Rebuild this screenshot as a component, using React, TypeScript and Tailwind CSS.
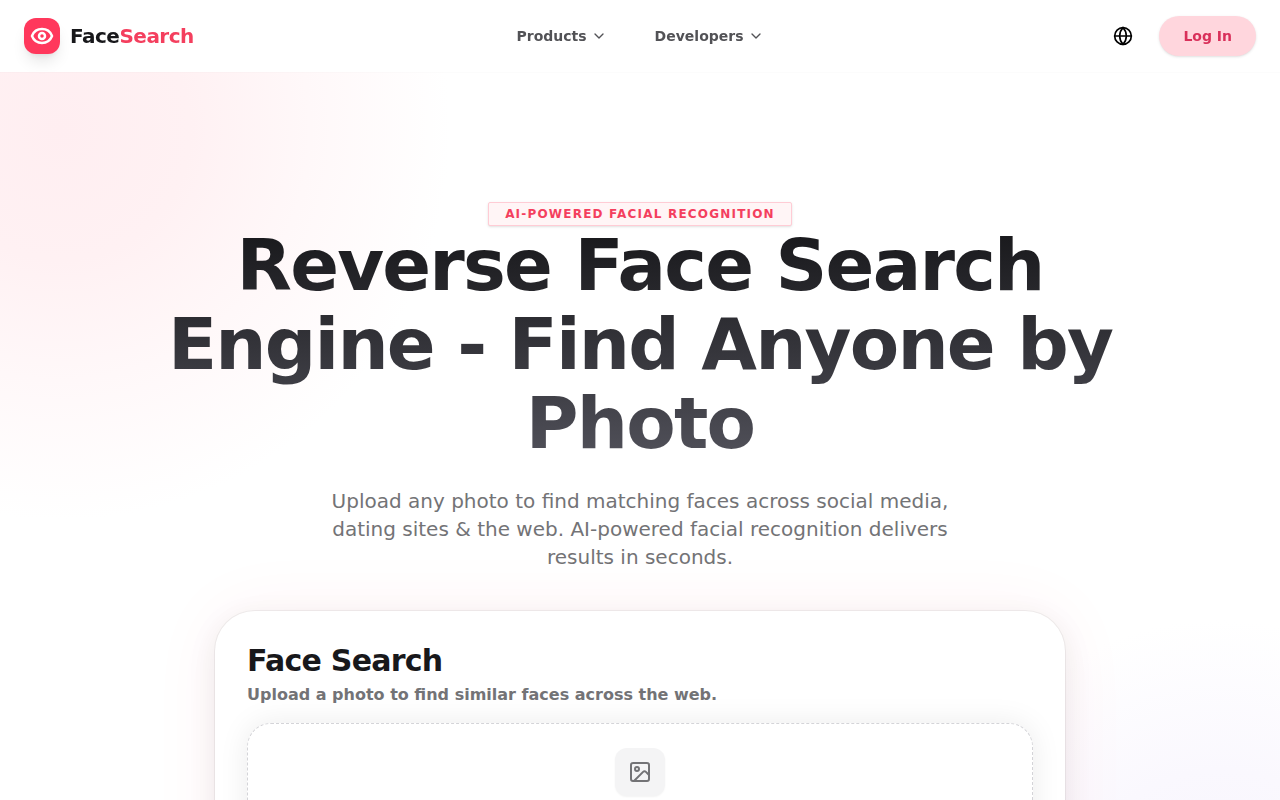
import React, { useState } from "react";
import { ChevronDown, Eye, Globe, Image } from "lucide-react";

const menus = ["Products", "Developers"];

const Logo = () => (
  <a href="#" className="flex items-center gap-2.5">
    <span className="flex size-9 items-center justify-center rounded-xl bg-[#ff385c] text-white shadow-lg shadow-black/10">
      <Eye size={24} strokeWidth={2.5} />
    </span>
    <span className="text-xl font-bold tracking-tight text-[#18181b]">
      Face<span className="text-[#f43f5e]">Search</span>
    </span>
  </a>
);

const Header = () => (
  <header className="fixed inset-x-0 top-0 z-20 grid h-[72px] grid-cols-[1fr_auto_1fr] items-center bg-white px-6 shadow-[0_1px_1px_rgba(0,0,0,0.01)]">
    <Logo />
    <nav className="flex items-center gap-12">
      {menus.map((m) => (
        <button
          key={m}
          type="button"
          className="flex cursor-pointer items-center gap-1 text-sm font-semibold text-[#525256]"
        >
          {m}
          <ChevronDown size={16} />
        </button>
      ))}
    </nav>
    <div className="flex items-center justify-end gap-4">
      <button
        type="button"
        aria-label="Language"
        className="flex size-10 cursor-pointer items-center justify-center text-black"
      >
        <Globe size={20} />
      </button>
      <button
        type="button"
        className="h-10 cursor-pointer rounded-full bg-[#ffd6dd] px-6 text-sm font-semibold text-[#d9305a] shadow-sm"
      >
        Log In
      </button>
    </div>
  </header>
);

const UploadCard = () => {
  const [fileName, setFileName] = useState("");

  return (
    <div className="w-full max-w-[850px] rounded-[40px] bg-white p-8 text-left shadow-[0_0_0_1px_rgba(0,0,0,0.05),0_8px_30px_rgba(0,0,0,0.08),0_0_70px_rgba(255,56,92,0.06)]">
      <h2 className="text-3xl font-bold tracking-tight text-[#18181b]">Face Search</h2>
      <p className="mt-1 font-semibold text-[#737376]">
        Upload a photo to find similar faces across the web.
      </p>
      <label className="mt-4 flex min-h-64 cursor-pointer flex-col items-center rounded-3xl border border-dashed border-[#d4d4d8] bg-white p-6 shadow-[0_0_30px_rgba(0,0,0,0.08)]">
        <input
          type="file"
          accept="image/*"
          aria-label="Upload a photo"
          className="sr-only"
          onChange={(e) => setFileName(e.target.files?.[0]?.name || "")}
        />
        <span className="flex h-12 w-[50px] items-center justify-center rounded-xl bg-[#f4f4f5] text-[#737376] shadow-xs">
          <Image size={24} />
        </span>
        {fileName && <span className="mt-3 text-sm text-[#525256]">{fileName}</span>}
      </label>
    </div>
  );
};

export default function App() {
  return (
    <div className="min-h-screen bg-white bg-[radial-gradient(circle_at_60px_130px,#ffeef1_0,#fff1f3_130px,#fff8f9_250px,transparent_390px),radial-gradient(circle_at_1220px_920px,#f6f4fd_0,#faf8fe_150px,transparent_300px)] bg-no-repeat font-['DejaVu_Sans',sans-serif]">
      <Header />
      <main className="flex flex-col items-center px-6 pt-[202px] pb-16 text-center">
        <span className="rounded-xs border border-[#ffccd5] bg-[#fff5f6] px-4 py-px text-xs leading-5 font-bold tracking-widest text-[#f43f5e] uppercase shadow-sm">
          AI-Powered Facial Recognition
        </span>
        <h1 className="max-w-5xl bg-linear-to-b from-[#18181b] to-[#52525b] bg-clip-text text-7xl leading-[79px] font-bold tracking-tight text-transparent">
          Reverse Face Search Engine - Find Anyone by Photo
        </h1>
        <p className="mt-6 mb-10 max-w-2xl text-xl text-[#737376]">
          Upload any photo to find matching faces across social media, dating sites &amp; the web.
          AI-powered facial recognition delivers results in seconds.
        </p>
        <UploadCard />
      </main>
    </div>
  );
}
